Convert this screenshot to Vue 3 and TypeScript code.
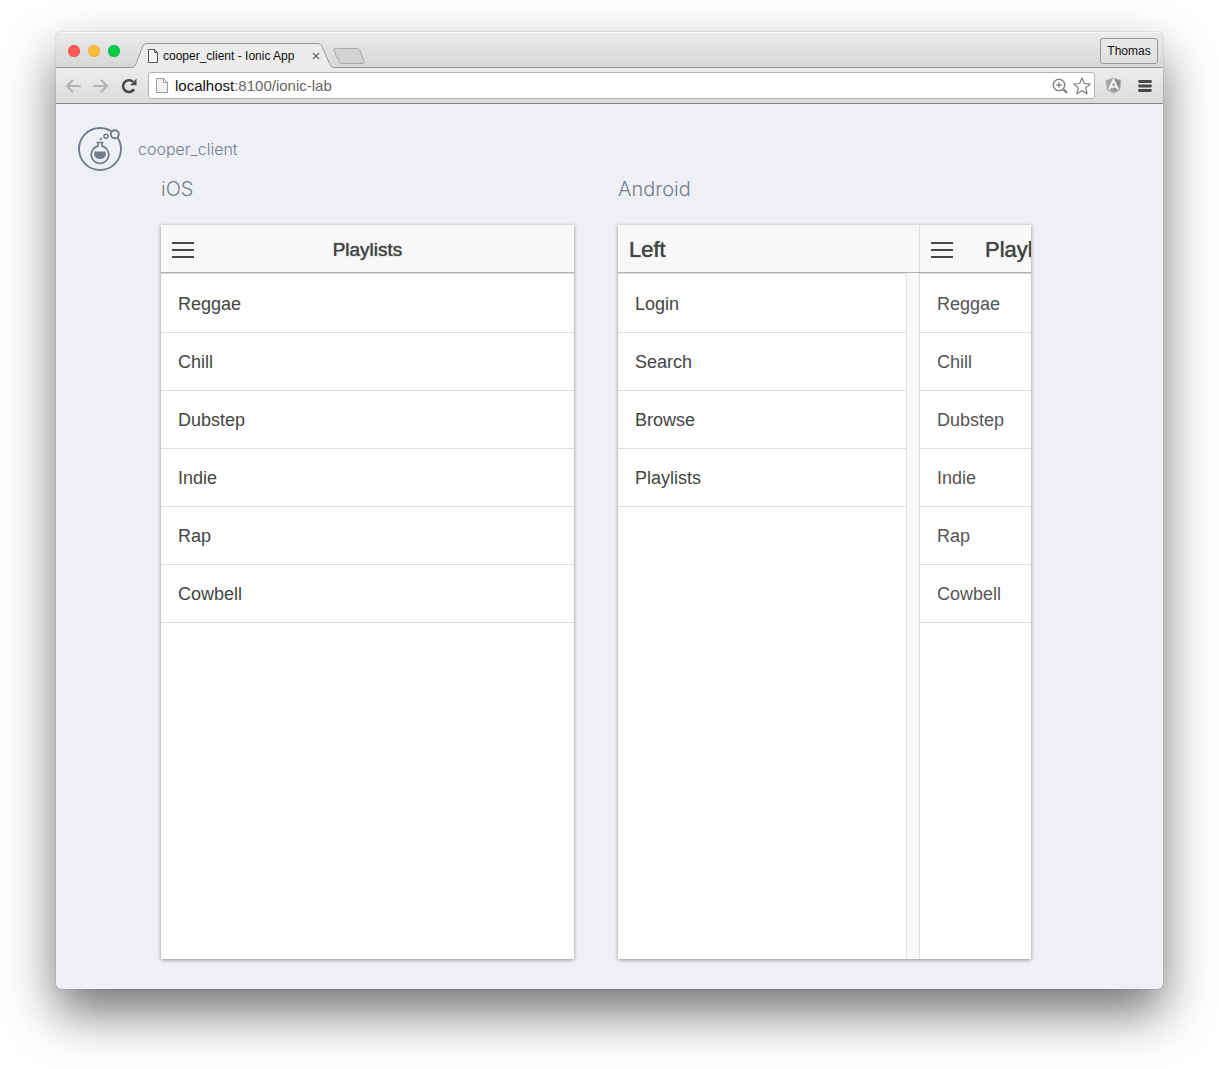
<script setup lang="ts">
import { ref } from 'vue'

const address = ref('localhost:8100/ionic-lab')
const playlists: string[] = ['Reggae', 'Chill', 'Dubstep', 'Indie', 'Rap', 'Cowbell']
const menu: string[] = ['Login', 'Search', 'Browse', 'Playlists']
</script>

<template>
  <div class="desktop">
    <div class="window">
      <header class="tabstrip">
        <div class="lights">
          <button class="light red" aria-label="Close window"></button>
          <button class="light amber" aria-label="Minimise window"></button>
          <button class="light green" aria-label="Zoom window"></button>
        </div>
        <div class="tab">
          <svg class="tab-shape" width="204" height="25" viewBox="0 0 204 25" aria-hidden="true">
            <path d="M0 24.500C4 24.500 4.500 22 5.500 19.500L11 5C12 2 13 .5 16 .5H186C189 .5 190.500 1.500 191.500 4.500L198 19.500C199 22.500 200 24.500 204 24.500V25H0Z" fill="#ececec" />
            <path d="M0 24.500C4 24.500 4.500 22 5.500 19.500L11 5C12 2 13 .5 16 .5H186C189 .5 190.500 1.500 191.500 4.500L198 19.500C199 22 200 24.500 204 24.500" fill="none" stroke="#979797" />
          </svg>
          <div class="tab-content">
            <svg width="10" height="14" viewBox="0 0 10 14" aria-hidden="true">
              <path d="M.5 .5H6.500L9.500 3.500V13.500H.5ZM6.500 .5V3.500H9.500" fill="#f6f6f6" stroke="#555" />
            </svg>
            <span class="tab-title">cooper_client - Ionic App</span>
            <button class="tab-close" aria-label="Close tab">
              <svg width="8" height="8" viewBox="0 0 8 8"><path d="M1 1L7 7M7 1L1 7" stroke="#777" stroke-width="1.500" /></svg>
            </button>
          </div>
        </div>
        <button class="new-tab" aria-label="New tab">
          <svg width="32" height="16" viewBox="0 0 32 16">
            <path d="M3 .5H24Q26 .5 27 2.500L31 13Q32 15.500 29 15.500H9Q7 15.500 6 13.500L1 3Q0 .5 3 .5Z" fill="#d2d2d2" stroke="#a9a9a9" />
          </svg>
        </button>
        <button class="profile">Thomas</button>
      </header>

      <nav class="toolbar">
        <button class="tool" aria-label="Back">
          <svg width="16" height="14" viewBox="0 0 16 14"><path d="M15 7H2M7.500 1.500L2 7L7.500 12.500" fill="none" stroke="#b4b4b4" stroke-width="2" stroke-linecap="round" /></svg>
        </button>
        <button class="tool forward" aria-label="Forward">
          <svg width="16" height="14" viewBox="0 0 16 14"><path d="M1 7H14M8.500 1.500L14 7L8.500 12.500" fill="none" stroke="#b4b4b4" stroke-width="2" stroke-linecap="round" /></svg>
        </button>
        <button class="tool reload" aria-label="Reload">
          <svg width="16" height="16" viewBox="0 0 16 16">
            <path d="M13 11.200A5.900 5.900 0 1 1 12 3.800" fill="none" stroke="#4b4b4b" stroke-width="2.600" />
            <path d="M15.500 .8V7.200H9Z" fill="#4b4b4b" />
          </svg>
        </button>
        <div class="omnibox">
          <svg width="12" height="15" viewBox="0 0 12 15" aria-hidden="true">
            <path d="M.5 .5H7.500L11.500 4.500V14.500H.5ZM7.500 .5V4.500H11.500" fill="#f4f4f4" stroke="#9a9a9a" />
          </svg>
          <label class="address">
            <span class="address-text" aria-hidden="true">localhost<span class="path">:8100/ionic-lab</span></span>
            <input v-model="address" class="address-input" type="text" aria-label="Address" />
          </label>
          <button class="tool" aria-label="Zoom">
            <svg width="16" height="16" viewBox="0 0 16 16">
              <circle cx="7" cy="7" r="5.700" fill="none" stroke="#868686" stroke-width="1.500" />
              <path d="M7 4.200V9.800M4.200 7H9.800" stroke="#868686" stroke-width="1.400" />
              <path d="M11.200 11.200L15 15" stroke="#868686" stroke-width="2.400" />
            </svg>
          </button>
          <button class="tool star" aria-label="Bookmark this page">
            <svg width="18" height="18" viewBox="0 0 18 18">
              <path d="M9 1L11.300 6.500L17.200 7L12.700 10.900L14.100 16.800L9 13.700L3.900 16.800L5.300 10.900L.8 7L6.700 6.500Z" fill="#fff" stroke="#7c7c7c" stroke-width="1.200" stroke-linejoin="round" />
            </svg>
          </button>
        </div>
        <button class="tool angular" aria-label="AngularJS Batarang">
          <svg width="17" height="17" viewBox="0 0 17 17">
            <path d="M8.500 .5L16.500 3.200L15.200 13L8.500 16.700L1.800 13L.5 3.200Z" fill="#b5b5b5" />
            <path d="M8.500 1.500L15.300 3.800L14.200 12.400L8.500 15.600Z" fill="#8c8c8c" />
            <path d="M8.500 1.500L1.700 3.800L2.800 12.400L8.500 15.600Z" fill="#a2a2a2" />
            <path d="M4 12.500L8.500 2.800L13 12.500M5.800 9.700H11.200" fill="none" stroke="#f7f7f7" stroke-width="1.900" />
          </svg>
        </button>
        <button class="tool more" aria-label="Menu">
          <svg width="14" height="14" viewBox="0 0 14 14"><path d="M1.500 2.500H12.500M1.500 7H12.500M1.500 11.500H12.500" stroke="#484848" stroke-width="2.800" stroke-linecap="round" /></svg>
        </button>
      </nav>

      <main class="lab">
        <div class="brand">
          <svg width="44" height="44" viewBox="0 0 44 44" fill="none" stroke="#747c8b" aria-hidden="true">
            <circle cx="22" cy="22" r="21" stroke-width="1.900" />
            <circle cx="36.800" cy="7.200" r="4" fill="#eff0f5" stroke-width="1.900" />
            <circle cx="28" cy="9.300" r="2" stroke-width="1.500" />
            <circle cx="23" cy="12" r="1.200" fill="#747c8b" stroke="none" />
            <path d="M18.500 15.500H25.500M20 16V19.200A8.700 8.700 0 1 0 24 19.200V16" stroke-width="1.700" />
            <path d="M16.500 24.500H27.500Q28.800 29 25.500 31.300Q22 32.500 18.500 31.300Q15.200 29 16.500 24.500Z" fill="#747c8b" stroke="none" />
          </svg>
          <h1>cooper_client</h1>
        </div>
        <div class="devices">
          <section class="device">
            <h2>iOS</h2>
            <div class="screen">
              <div class="pane full">
                <div class="bar">
                  <button class="burger" aria-label="Open menu">
                    <svg width="22" height="16" viewBox="0 0 22 16"><path d="M0 1H22M0 8H22M0 15H22" stroke="#484848" stroke-width="2" /></svg>
                  </button>
                  <h3 class="centred">Playlists</h3>
                </div>
                <ul>
                  <li v-for="name in playlists" :key="name"><a href="#">{{ name }}</a></li>
                </ul>
              </div>
            </div>
          </section>
          <section class="device">
            <h2>Android</h2>
            <div class="screen">
              <div class="pane side">
                <div class="bar"><h3 class="large">Left</h3></div>
                <div class="side-body">
                  <ul class="side-list">
                    <li v-for="name in menu" :key="name"><a href="#">{{ name }}</a></li>
                  </ul>
                </div>
              </div>
              <div class="pane pushed">
                <div class="bar">
                  <button class="burger" aria-label="Close menu">
                    <svg width="22" height="16" viewBox="0 0 22 16"><path d="M0 1H22M0 8H22M0 15H22" stroke="#484848" stroke-width="2" /></svg>
                  </button>
                  <h3 class="large after-burger">Playlists</h3>
                </div>
                <ul class="dimmed">
                  <li v-for="name in playlists" :key="name"><a href="#">{{ name }}</a></li>
                </ul>
              </div>
            </div>
          </section>
        </div>
      </main>
    </div>
  </div>
</template>

<style>
body {
  background: #fff;
}
</style>

<style scoped>
* {
  box-sizing: border-box;
}
.desktop {
  min-height: 100vh;
  padding: 32px 56px 80px;
  display: flex;
  overflow: hidden;
  font-family: "Liberation Sans", Arial, sans-serif;
}
.window {
  flex: 1;
  min-width: 0;
  display: flex;
  flex-direction: column;
  border-radius: 5px;
  overflow: hidden;
  background: #eff0f5;
  box-shadow: 0 0 1px rgba(0, 0, 0, 0.6), 0 24px 50px rgba(0, 0, 0, 0.55);
}
button {
  border: 0;
  padding: 0;
  background: none;
  font: inherit;
  color: inherit;
}
svg {
  display: block;
  flex: none;
}
h1,
h2,
h3,
ul {
  margin: 0;
  padding: 0;
  font-weight: 400;
}

.tabstrip {
  height: 36px;
  display: flex;
  align-items: flex-end;
  padding: 0 5px 0 12px;
  background: linear-gradient(#ebebeb, #d7d7d7);
  box-shadow: inset 0 1px #f6f6f6, inset 0 -1px #979797;
}
.lights {
  display: flex;
  gap: 8px;
  padding-bottom: 11px;
}
.light {
  width: 12px;
  height: 12px;
  border-radius: 50%;
}
.red {
  background: #fc5b57;
  box-shadow: inset 0 0 1px #c33;
}
.amber {
  background: #fdbc40;
  box-shadow: inset 0 0 1px #c83;
}
.green {
  background: #05cb47;
  box-shadow: inset 0 0 1px #093;
}
.tab {
  display: grid;
  margin-left: 11px;
}
.tab > * {
  grid-area: 1 / 1;
}
.tab-content {
  display: flex;
  align-items: center;
  padding: 0 15px 0 17px;
}
.tab-title {
  margin-left: 5px;
  flex: 1;
  font-size: 12px;
  white-space: nowrap;
  color: #111;
}
.new-tab {
  margin-left: -2px;
  padding-bottom: 4px;
}
.profile {
  margin: 0 0 4px auto;
  width: 58px;
  height: 26px;
  border: 1px solid #999;
  border-radius: 3px;
  background: linear-gradient(#e9e9e9, #e0e0e0);
  font-size: 12px;
  color: #111;
}

.toolbar {
  height: 36px;
  display: flex;
  align-items: center;
  padding: 0 11px 0 9px;
  background: linear-gradient(#ececec, #dcdcdc);
  border-bottom: 1px solid #858585;
}
.forward {
  margin-left: 12px;
}
.reload {
  margin: 0 11px 0 12px;
}
.omnibox {
  flex: 1;
  height: 27px;
  display: flex;
  align-items: center;
  padding: 0 3px 0 7px;
  border: 1px solid #b4b4b4;
  border-radius: 3px;
  background: #fff;
}
.address {
  flex: 1;
  display: grid;
  margin-left: 7px;
  font-size: 15px;
  line-height: 20px;
}
.address > * {
  grid-area: 1 / 1;
}
.address-text {
  color: #111;
}
.path {
  color: #666;
}
.address-input {
  width: 100%;
  border: 0;
  padding: 0;
  outline: 0;
  background: none;
  font: inherit;
  color: transparent;
}
.star {
  margin-left: 5px;
}
.angular {
  margin-left: 10px;
}
.more {
  margin-left: 16px;
}

.lab {
  flex: 1;
  display: flex;
  flex-direction: column;
  padding: 23px 22px 30px;
  color: #747c8b;
}
.brand {
  display: flex;
  align-items: center;
  gap: 16px;
}
h1 {
  font-family: Inter, sans-serif;
  font-weight: 300;
  font-size: 16px;
  line-height: 24px;
}
h2 {
  margin-bottom: 24px;
  font-family: Inter, sans-serif;
  font-weight: 300;
  font-size: 20px;
  line-height: 24px;
}
.devices {
  flex: 1;
  display: flex;
  gap: 44px;
  margin: 6px 110px 0 83px;
}
.device {
  flex: 1;
  min-width: 0;
  display: flex;
  flex-direction: column;
}
.screen {
  flex: 1;
  display: flex;
  overflow: hidden;
  background: #fff;
  color: #444;
  box-shadow: 0 1px 4px rgba(0, 0, 0, 0.4);
}
.pane {
  display: flex;
  flex-direction: column;
  min-width: 0;
}
.full {
  flex: 1;
}
.side {
  flex: 1;
}
.pushed {
  width: 111px;
  overflow: hidden;
  box-shadow: 0 0 2px rgba(0, 0, 0, 0.3);
}
.bar {
  height: 48px;
  flex: none;
  display: flex;
  align-items: center;
  padding: 2px 11px 0;
  background: #f8f8f8;
  border-bottom: 1px solid #b2b2b2;
  white-space: nowrap;
}
.bar h3 {
  text-shadow: 0 0 1px #444;
}
.centred {
  flex: 1;
  padding-right: 22px;
  text-align: center;
  font-size: 19px;
}
.large {
  font-size: 22px;
}
.after-burger {
  margin-left: 32px;
}
ul {
  list-style: none;
  padding-top: 1px;
  border-top: 1px solid #ddd;
}
li {
  height: 58px;
  border-bottom: 1px solid #ddd;
}
li a {
  display: block;
  padding: 0 17px;
  font-size: 18px;
  line-height: 58px;
  color: #444;
  text-decoration: none;
}
.dimmed a {
  color: #555;
}
.side-body {
  flex: 1;
  display: flex;
  padding-right: 13px;
  background: #fafafa;
}
.side-list {
  flex: 1;
  background: #fff;
  border-right: 1px solid #e2e2e2;
}
</style>
